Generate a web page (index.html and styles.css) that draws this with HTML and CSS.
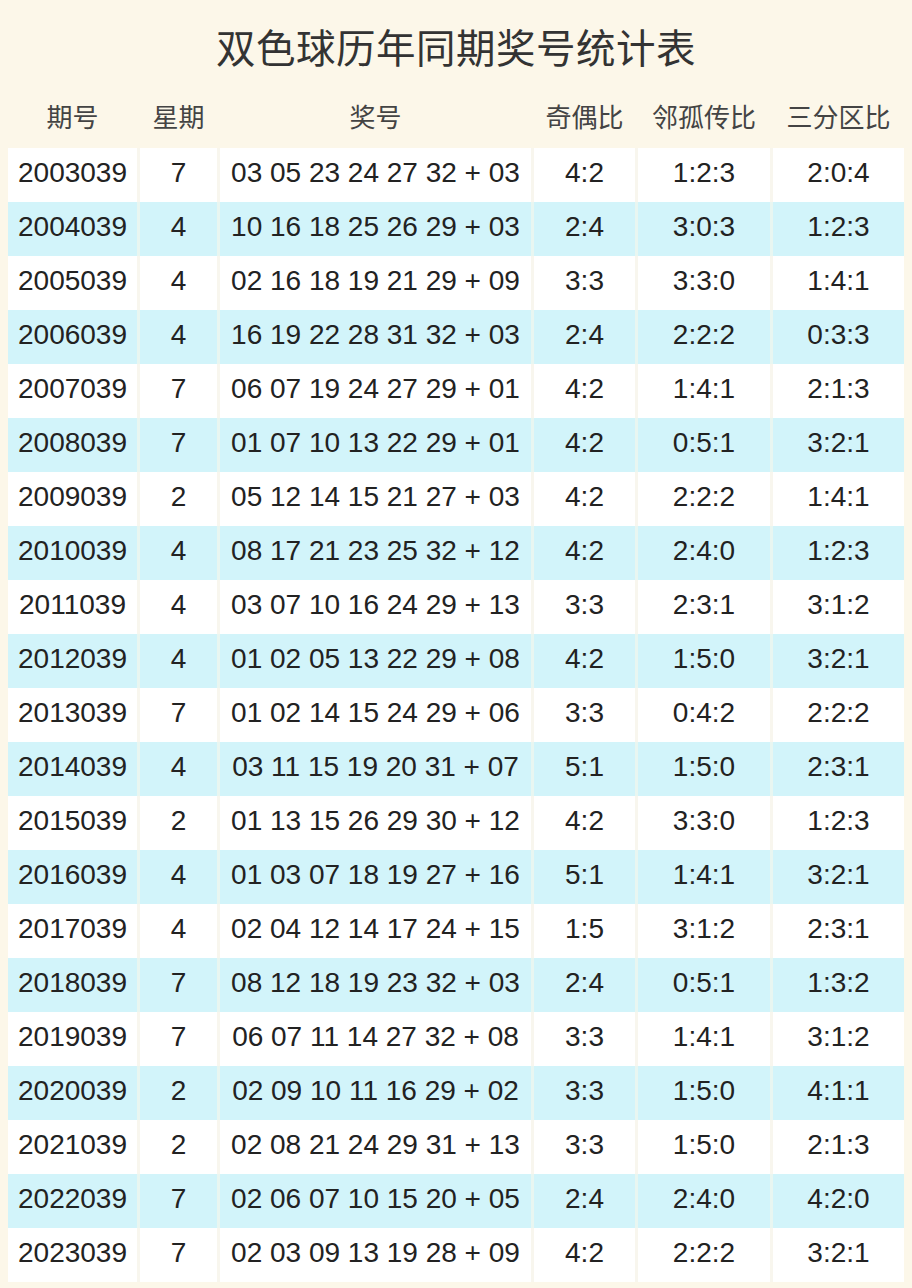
FILE: index.html
```html
<!DOCTYPE html>
<html lang="zh">
<head>
<meta charset="utf-8">
<title>双色球历年同期奖号统计表</title>
<link rel="stylesheet" href="styles.css">
</head>
<body>
<div class="page">
  <h1 class="title">双色球历年同期奖号统计表</h1>
  <div class="row head">
    <div class="cell">期号</div><div class="cell">星期</div><div class="cell">奖号</div><div class="cell">奇偶比</div><div class="cell">邻孤传比</div><div class="cell">三分区比</div>
  </div>
  <div class="row"><div class="cell">2003039</div><div class="cell">7</div><div class="cell">03 05 23 24 27 32 + 03</div><div class="cell">4:2</div><div class="cell">1:2:3</div><div class="cell">2:0:4</div></div>
  <div class="row alt"><div class="cell">2004039</div><div class="cell">4</div><div class="cell">10 16 18 25 26 29 + 03</div><div class="cell">2:4</div><div class="cell">3:0:3</div><div class="cell">1:2:3</div></div>
  <div class="row"><div class="cell">2005039</div><div class="cell">4</div><div class="cell">02 16 18 19 21 29 + 09</div><div class="cell">3:3</div><div class="cell">3:3:0</div><div class="cell">1:4:1</div></div>
  <div class="row alt"><div class="cell">2006039</div><div class="cell">4</div><div class="cell">16 19 22 28 31 32 + 03</div><div class="cell">2:4</div><div class="cell">2:2:2</div><div class="cell">0:3:3</div></div>
  <div class="row"><div class="cell">2007039</div><div class="cell">7</div><div class="cell">06 07 19 24 27 29 + 01</div><div class="cell">4:2</div><div class="cell">1:4:1</div><div class="cell">2:1:3</div></div>
  <div class="row alt"><div class="cell">2008039</div><div class="cell">7</div><div class="cell">01 07 10 13 22 29 + 01</div><div class="cell">4:2</div><div class="cell">0:5:1</div><div class="cell">3:2:1</div></div>
  <div class="row"><div class="cell">2009039</div><div class="cell">2</div><div class="cell">05 12 14 15 21 27 + 03</div><div class="cell">4:2</div><div class="cell">2:2:2</div><div class="cell">1:4:1</div></div>
  <div class="row alt"><div class="cell">2010039</div><div class="cell">4</div><div class="cell">08 17 21 23 25 32 + 12</div><div class="cell">4:2</div><div class="cell">2:4:0</div><div class="cell">1:2:3</div></div>
  <div class="row"><div class="cell">2011039</div><div class="cell">4</div><div class="cell">03 07 10 16 24 29 + 13</div><div class="cell">3:3</div><div class="cell">2:3:1</div><div class="cell">3:1:2</div></div>
  <div class="row alt"><div class="cell">2012039</div><div class="cell">4</div><div class="cell">01 02 05 13 22 29 + 08</div><div class="cell">4:2</div><div class="cell">1:5:0</div><div class="cell">3:2:1</div></div>
  <div class="row"><div class="cell">2013039</div><div class="cell">7</div><div class="cell">01 02 14 15 24 29 + 06</div><div class="cell">3:3</div><div class="cell">0:4:2</div><div class="cell">2:2:2</div></div>
  <div class="row alt"><div class="cell">2014039</div><div class="cell">4</div><div class="cell">03 11 15 19 20 31 + 07</div><div class="cell">5:1</div><div class="cell">1:5:0</div><div class="cell">2:3:1</div></div>
  <div class="row"><div class="cell">2015039</div><div class="cell">2</div><div class="cell">01 13 15 26 29 30 + 12</div><div class="cell">4:2</div><div class="cell">3:3:0</div><div class="cell">1:2:3</div></div>
  <div class="row alt"><div class="cell">2016039</div><div class="cell">4</div><div class="cell">01 03 07 18 19 27 + 16</div><div class="cell">5:1</div><div class="cell">1:4:1</div><div class="cell">3:2:1</div></div>
  <div class="row"><div class="cell">2017039</div><div class="cell">4</div><div class="cell">02 04 12 14 17 24 + 15</div><div class="cell">1:5</div><div class="cell">3:1:2</div><div class="cell">2:3:1</div></div>
  <div class="row alt"><div class="cell">2018039</div><div class="cell">7</div><div class="cell">08 12 18 19 23 32 + 03</div><div class="cell">2:4</div><div class="cell">0:5:1</div><div class="cell">1:3:2</div></div>
  <div class="row"><div class="cell">2019039</div><div class="cell">7</div><div class="cell">06 07 11 14 27 32 + 08</div><div class="cell">3:3</div><div class="cell">1:4:1</div><div class="cell">3:1:2</div></div>
  <div class="row alt"><div class="cell">2020039</div><div class="cell">2</div><div class="cell">02 09 10 11 16 29 + 02</div><div class="cell">3:3</div><div class="cell">1:5:0</div><div class="cell">4:1:1</div></div>
  <div class="row"><div class="cell">2021039</div><div class="cell">2</div><div class="cell">02 08 21 24 29 31 + 13</div><div class="cell">3:3</div><div class="cell">1:5:0</div><div class="cell">2:1:3</div></div>
  <div class="row alt"><div class="cell">2022039</div><div class="cell">7</div><div class="cell">02 06 07 10 15 20 + 05</div><div class="cell">2:4</div><div class="cell">2:4:0</div><div class="cell">4:2:0</div></div>
  <div class="row"><div class="cell">2023039</div><div class="cell">7</div><div class="cell">02 03 09 13 19 28 + 09</div><div class="cell">4:2</div><div class="cell">2:2:2</div><div class="cell">3:2:1</div></div>
</div>
</body>
</html>
```

FILE: styles.css
```css
html, body {
  margin: 0;
  padding: 0;
  background: #fcf7e9;
}
.page {
  width: 912px;
  height: 1288px;
  box-sizing: border-box;
  padding: 0 8px;
  font-family: "Liberation Sans", "Noto Sans CJK SC", sans-serif;
  color: #222;
  overflow: hidden;
}
.title {
  margin: 0;
  height: 92px;
  line-height: 92px;
  text-align: center;
  font-family: "Noto Sans CJK SC", sans-serif;
  font-weight: 400;
  font-size: 39.5px;
  color: #333;
  letter-spacing: 0.5px;
}
.row {
  display: grid;
  grid-template-columns: 129px 77px 311px 101px 132px 131px;
  column-gap: 3px;
  height: 54px;
  background: #f8f6ee;
}
.row.alt {
  background: #e8f6f1;
}
.row .cell {
  background: #ffffff;
  text-align: center;
  font-size: 28px;
  line-height: 50px;
  padding-bottom: 4px;
  white-space: nowrap;
}
.row.alt .cell {
  background: #d2f4fa;
}
.row.head {
  height: 56px;
  background: transparent;
}
.row.head .cell {
  background: transparent;
  font-family: "Noto Sans CJK SC", sans-serif;
  font-size: 26px;
  color: #444;
  line-height: 47px;
  padding-bottom: 9px;
}
```
